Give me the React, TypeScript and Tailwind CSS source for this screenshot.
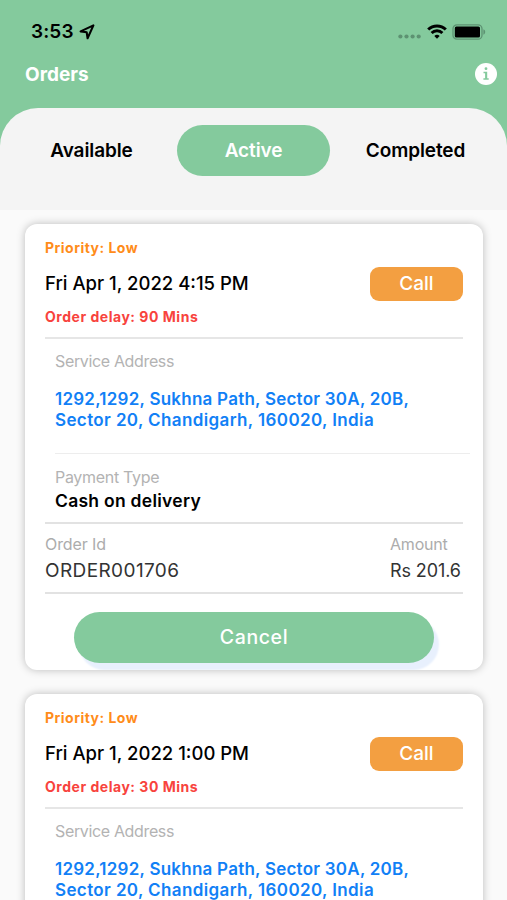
import { useState } from "react";

type Order = {
    id: string;
    priority: string;
    date: string;
    delay: string;
    address: string[];
    payment: string;
    amount: string;
};

const tabs = ["Available", "Active", "Completed"];

const address = ["1292,1292, Sukhna Path, Sector 30A, 20B,", "Sector 20, Chandigarh, 160020, India"];

const orders: Order[] = [
    {
        id: "ORDER001706",
        priority: "Low",
        date: "Fri Apr 1, 2022 4:15 PM",
        delay: "90 Mins",
        address,
        payment: "Cash on delivery",
        amount: "Rs 201.6",
    },
    {
        id: "ORDER001705",
        priority: "Low",
        date: "Fri Apr 1, 2022 1:00 PM",
        delay: "30 Mins",
        address,
        payment: "Cash on delivery",
        amount: "Rs 201.6",
    },
];

function StatusBar() {
    return (
        <div className="flex h-[63px] items-center justify-between pl-[31px] pr-[21px] text-black">
            <div className="flex items-center gap-[5px]">
                <span className="text-[19px] font-semibold leading-6 tracking-[0.1px]">3:53</span>
                <svg width="16" height="16" viewBox="0 0 16 16" fill="none" stroke="currentColor" strokeWidth="2.1" strokeLinejoin="round">
                    <path d="M14.4 1.4 1.6 7.4l6.1.9.9 6z" />
                </svg>
            </div>
            <div className="flex items-center">
                <svg className="mt-[9px]" width="23" height="5" viewBox="0 0 23 5" fill="#5d9272">
                    <circle cx="2.4" cy="2.5" r="2.1" />
                    <circle cx="8.5" cy="2.5" r="2.1" />
                    <circle cx="14.6" cy="2.5" r="2.1" />
                    <circle cx="20.7" cy="2.5" r="2.1" />
                </svg>
                <svg className="ml-[6px]" width="20" height="15" viewBox="0 0 20 15" fill="none" stroke="currentColor" strokeWidth="3">
                    <path d="M1.2 5.5a12.6 12.6 0 0 1 17.6 0" />
                    <path d="M4.6 9a7.8 7.8 0 0 1 10.8 0" />
                    <path d="M10 14.8 7.3 12a3.9 3.9 0 0 1 5.4 0z" fill="currentColor" stroke="none" />
                </svg>
                <svg className="ml-[5px]" width="34" height="16" viewBox="0 0 34 16">
                    <rect x="1" y="0.8" width="29" height="14.4" rx="4" fill="none" stroke="#5d9272" strokeWidth="1.3" />
                    <rect x="2.8" y="2.5" width="25.2" height="11" rx="1.6" fill="#000" />
                    <path d="M31.4 5.3c2.4.8 2.4 4.6 0 5.4z" fill="#5d9272" />
                </svg>
            </div>
        </div>
    );
}

function InfoIcon() {
    return (
        <svg width="22" height="22" viewBox="0 0 22 22">
            <circle cx="11" cy="11" r="11" fill="#fff" />
            <g fill="#84ca9d">
                <circle cx="11" cy="5.7" r="1.4" />
                <path d="M8.5 8.7h3.7v6.5h1.5v1.6H8.4v-1.6h1.7v-4.9H8.5z" />
            </g>
        </svg>
    );
}

function OrderCard({ order }: { order: Order }) {
    return (
        <article className="h-[446px] shrink-0 overflow-hidden rounded-[12px] bg-white px-5 shadow-[0_0_8px_rgba(0,0,0,0.25)]">
            <div className="pt-[14px] text-[14px] font-bold leading-5 tracking-[0.47px] text-[#ff8c1a]">
                Priority: {order.priority}
            </div>
            <div className="mt-[9px] flex h-[34px] items-center justify-between">
                <span className="text-[18.5px] font-medium text-black">{order.date}</span>
                <button type="button" className="h-[34px] w-[93px] rounded-[9px] bg-[#f39f41] pt-px text-[19px] font-medium text-white">
                    Call
                </button>
            </div>
            <div className="mt-[6px] text-[14px] font-bold leading-5 tracking-[0.52px] text-[#f8433d]">
                Order delay: {order.delay}
            </div>
            <div className="mt-[10px] h-[116px] border-t-2 border-[#e6e6e6] pl-[10px]">
                <p className="mt-3 text-[16px] leading-5 tracking-[-0.35px] text-[#b3b3b3]">Service Address</p>
                <div className="mt-[18px] whitespace-nowrap text-[17px] font-semibold leading-[21px] text-[#1180f6]">
                    {order.address.map((line, i) => (
                        <p key={line} className={i === 0 ? "tracking-[0.24px]" : "tracking-[0.38px]"}>
                            {line}
                        </p>
                    ))}
                </div>
            </div>
            <div className="-mr-[7px] ml-[10px] h-[69px] border-t border-[#ededed] pt-[13px]">
                <p className="text-[16px] leading-5 tracking-[-0.3px] text-[#b3b3b3]">Payment Type</p>
                <p className="mt-1 text-[17.5px] font-semibold leading-5 tracking-[0.27px] text-black">{order.payment}</p>
            </div>
            <div className="flex h-[72px] justify-between border-y-2 border-[#e2e2e2] pt-[10px]">
                <div>
                    <p className="text-[16px] leading-5 tracking-[-0.1px] text-[#acacac]">Order Id</p>
                    <p className="mt-[5px] text-[19px] leading-[23px] tracking-[0.4px] text-[#333]">{order.id}</p>
                </div>
                <div className="w-[73px] whitespace-nowrap">
                    <p className="text-[16px] leading-5 tracking-[-0.2px] text-[#acacac]">Amount</p>
                    <p className="mt-[5px] text-[18px] leading-[23px] tracking-[-0.1px] text-[#333]">{order.amount}</p>
                </div>
            </div>
            <button
                type="button"
                className="ml-[29px] mt-[18px] block h-[51px] w-[360px] rounded-full bg-[#84ca9d] text-[19.5px] font-medium tracking-[0.6px] text-white shadow-[5px_7px_2px_#e8f0fd]"
            >
                Cancel
            </button>
        </article>
    );
}

export default function App() {
    const [active, setActive] = useState("Active");

    return (
        <div className="flex h-screen flex-col overflow-hidden bg-[#fafafa] font-['Inter',sans-serif]">
            <header className="shrink-0 bg-[#84ca9d]">
                <StatusBar />
                <div className="flex h-[45px] items-start justify-between pl-[25px] pr-[10px]">
                    <h1 className="text-[19px] font-bold leading-6 text-white">Orders</h1>
                    <InfoIcon />
                </div>
                <nav className="flex h-[102px] items-start justify-center gap-[9px] rounded-t-[38px] bg-[#f4f4f4] pt-[17px]">
                    {tabs.map((tab) => (
                        <button
                            key={tab}
                            type="button"
                            onClick={() => setActive(tab)}
                            className={`h-[51px] w-[153px] rounded-full pt-[2px] text-[19px] font-semibold tracking-[-0.1px] ${
                                active === tab ? "bg-[#84ca9d] text-white" : "text-black"
                            }`}
                        >
                            {tab}
                        </button>
                    ))}
                </nav>
            </header>
            <main className="flex flex-1 flex-col gap-6 overflow-hidden pl-[25px] pr-6 pt-[14px]">
                {orders.map((order) => (
                    <OrderCard key={order.id} order={order} />
                ))}
            </main>
        </div>
    );
}
